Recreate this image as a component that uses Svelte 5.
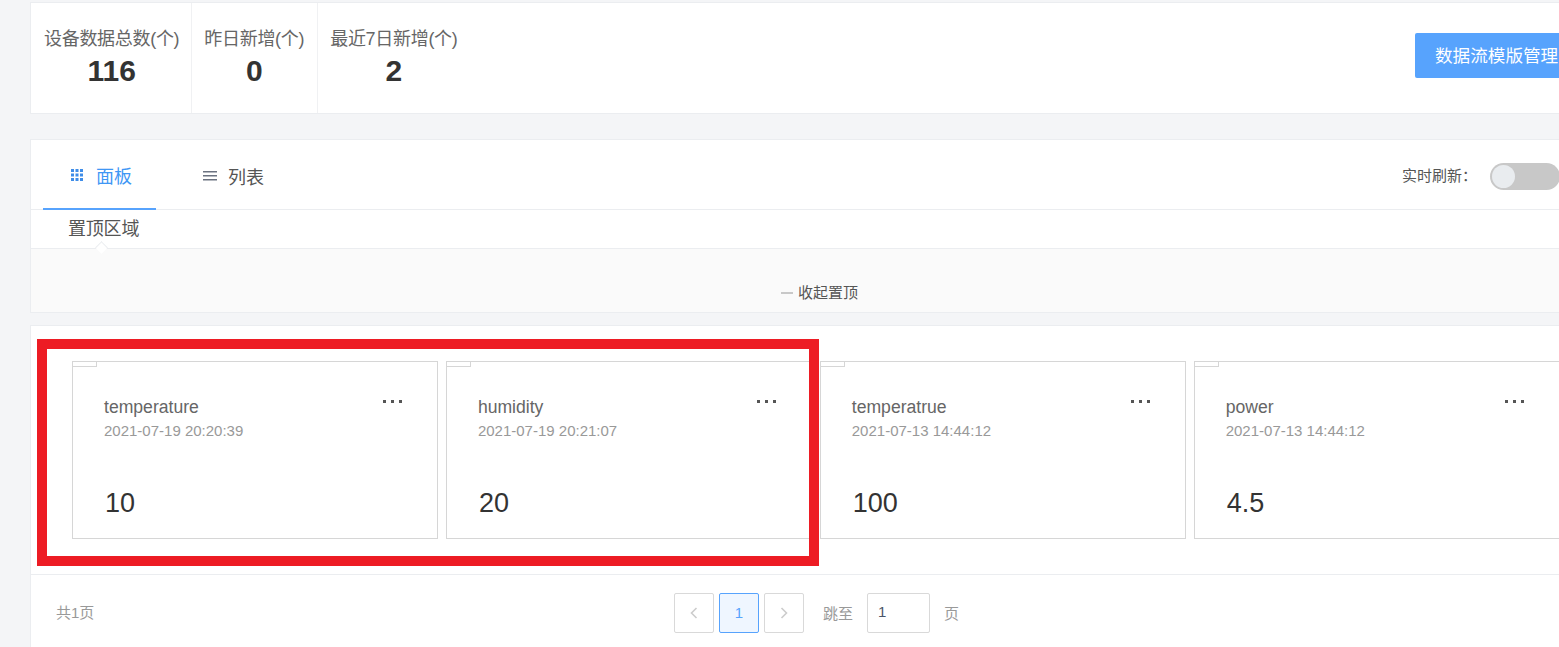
<script>
  const stats = [
    { label: '设备数据总数(个)', value: 116 },
    { label: '昨日新增(个)', value: 0 },
    { label: '最近7日新增(个)', value: 2 }
  ];

  const cards = [
    { name: 'temperature', time: '2021-07-19 20:20:39', value: '10' },
    { name: 'humidity', time: '2021-07-19 20:21:07', value: '20' },
    { name: 'temperatrue', time: '2021-07-13 14:44:12', value: '100' },
    { name: 'power', time: '2021-07-13 14:44:12', value: '4.5' }
  ];
</script>

<div class="page">
  <section class="panel summary">
    {#each stats as stat}
      <div class="stat">
        <div class="stat-label">{stat.label}</div>
        <div class="stat-value">{stat.value}</div>
      </div>
    {/each}
    <button class="primary">数据流模版管理</button>
  </section>

  <section class="panel top-area">
    <div class="tabs">
      <div class="tab active">
        <svg width="12" height="12" viewBox="0 0 12 12" fill="currentColor">
          <rect x="0" y="0" width="3" height="3" /><rect x="4.5" y="0" width="3" height="3" /><rect x="9" y="0" width="3" height="3" />
          <rect x="0" y="4.5" width="3" height="3" /><rect x="4.5" y="4.5" width="3" height="3" /><rect x="9" y="4.5" width="3" height="3" />
          <rect x="0" y="9" width="3" height="3" /><rect x="4.5" y="9" width="3" height="3" /><rect x="9" y="9" width="3" height="3" />
        </svg>
        <span>面板</span>
      </div>
      <div class="tab">
        <svg width="14" height="12" viewBox="0 0 14 12" fill="currentColor">
          <rect x="0" y="1" width="14" height="1.5" /><rect x="0" y="5" width="14" height="1.5" /><rect x="0" y="9" width="14" height="1.5" />
        </svg>
        <span>列表</span>
      </div>
      <div class="refresh">
        <span>实时刷新：</span>
        <div class="switch"><div class="knob"></div></div>
      </div>
    </div>
    <div class="pin-title">置顶区域</div>
    <div class="pin-body">
      <div class="caret"></div>
      <div class="collapse"><i></i>收起置顶</div>
    </div>
  </section>

  <section class="panel list">
    <div class="cards">
      {#each cards as card}
        <div class="card">
          <div class="corner"></div>
          <div class="more"><i></i><i></i><i></i></div>
          <div class="card-name">{card.name}</div>
          <div class="card-time">{card.time}</div>
          <div class="card-value">{card.value}</div>
        </div>
      {/each}
    </div>
    <div class="footer">
      <span class="total">共1页</span>
      <div class="pager">
        <div class="page-btn">
          <svg width="8" height="12" viewBox="0 0 8 12" fill="none" stroke="#ccc" stroke-width="1.6"><path d="M6.5 1 1.5 6l5 5" /></svg>
        </div>
        <div class="page-btn current">1</div>
        <div class="page-btn">
          <svg width="8" height="12" viewBox="0 0 8 12" fill="none" stroke="#ccc" stroke-width="1.6"><path d="M1.5 1l5 5-5 5" /></svg>
        </div>
        <span class="jump">跳至</span>
        <div class="page-input">1</div>
        <span class="unit">页</span>
      </div>
    </div>
  </section>

  <div class="highlight"></div>
</div>

<style>
  :global(body) {
    margin: 0;
    background: #f4f5f7;
  }

  .page {
    position: relative;
    width: 1559px;
    height: 647px;
    padding: 2px 0 0 30px;
    box-sizing: border-box;
    overflow: hidden;
    background: #f4f5f7;
    font-family: "Liberation Sans", "Noto Sans CJK SC", sans-serif;
    color: #666;
  }

  .panel {
    width: 1560px;
    box-sizing: border-box;
    background: #fff;
    border: 1px solid #ebedf0;
  }

  .summary {
    display: flex;
    height: 112px;
  }

  .stat {
    padding: 23px 12px 0 13px;
    border-right: 1px solid #f0f1f3;
    text-align: center;
    flex: none;
  }

  .stat + .stat {
    padding-left: 12px;
    padding-right: 13px;
  }

  .stat-label {
    font-size: 18px;
    line-height: 27px;
    letter-spacing: -0.3px;
    color: #666;
    white-space: nowrap;
  }

  .stat-value {
    font-size: 30px;
    line-height: 36px;
    font-weight: 700;
    color: #333;
  }

  .stat:nth-child(3) {
    border-right: 0;
  }

  .primary {
    margin: 30px 16px 0 auto;
    width: 158px;
    height: 45px;
    padding: 0 0 2px 20px;
    border: 0;
    border-radius: 2px 0 0 2px;
    background: #57a3fd;
    color: #fff;
    font: inherit;
    font-size: 17.6px;
    text-align: left;
    white-space: nowrap;
  }

  .top-area {
    margin-top: 25px;
    height: 174px;
  }

  .tabs {
    display: flex;
    align-items: center;
    height: 69px;
    padding-left: 12px;
    padding-right: 29px;
    border-bottom: 1px solid #ebedf0;
  }

  .tab {
    display: flex;
    align-items: center;
    justify-content: center;
    gap: 11px;
    box-sizing: border-box;
    width: 113px;
    height: 70px;
    padding: 2px 0 0 4px;
    margin-right: 16px;
    font-size: 18px;
    color: #555;
  }

  .tab svg {
    color: #6b7280;
  }

  .tab.active {
    gap: 13px;
    margin-right: 19px;
    margin-top: 1px;
    padding-top: 1px;
    color: #3f97f5;
    border-bottom: 2px solid #57a3fd;
  }

  .tab.active svg {
    color: #3f8de8;
  }

  .refresh {
    display: flex;
    align-items: center;
    gap: 13px;
    margin-left: auto;
    font-size: 15px;
    color: #555;
  }

  .switch {
    width: 70px;
    height: 27px;
    margin-top: 4px;
    border-radius: 14px;
    background: #c8c8c8;
    box-sizing: border-box;
    padding: 2px;
  }

  .knob {
    width: 23px;
    height: 23px;
    border-radius: 50%;
    background: #e9ecef;
  }

  .pin-title {
    height: 38px;
    padding-left: 37px;
    font-size: 18px;
    letter-spacing: -0.2px;
    line-height: 39px;
    color: #555;
  }

  .pin-body {
    position: relative;
    height: 64px;
    border-top: 1px solid #ebedf0;
    background: #fafafa;
    box-sizing: border-box;
    text-align: center;
  }

  .caret {
    position: absolute;
    left: 66px;
    top: -6px;
    width: 9px;
    height: 9px;
    box-sizing: border-box;
    background: #fff;
    border-top: 1px solid #ebedf0;
    border-left: 1px solid #ebedf0;
    transform: rotate(45deg);
  }

  .collapse {
    position: absolute;
    left: 750px;
    top: 34px;
    display: flex;
    align-items: center;
    font-size: 15px;
    line-height: 20px;
    color: #555;
    white-space: nowrap;
  }

  .collapse i {
    width: 12px;
    height: 2px;
    margin-right: 5px;
    background: #c8c8c8;
  }

  .list {
    margin-top: 12px;
    height: 341px;
  }

  .cards {
    display: flex;
    gap: 8px;
    height: 249px;
    box-sizing: border-box;
    padding: 35px 0 0 41px;
    border-bottom: 1px solid #ebedf0;
  }

  .card {
    position: relative;
    flex: none;
    width: 365.9px;
    height: 178px;
    box-sizing: border-box;
    padding: 34px 0 0 31px;
    border: 1px solid #d6d6d6;
  }

  .corner {
    position: absolute;
    left: 0;
    top: 0;
    width: 23px;
    height: 4px;
    border-right: 1px solid #d6d6d6;
    border-bottom: 1px solid #d6d6d6;
  }

  .more {
    position: absolute;
    right: 35px;
    top: 38px;
    display: flex;
    gap: 5px;
  }

  .more i {
    width: 3px;
    height: 3px;
    background: #555;
  }

  .card-name {
    font-size: 17.6px;
    line-height: 22px;
    color: #666;
  }

  .card-time {
    margin-top: 3px;
    font-size: 15px;
    line-height: 20px;
    color: #999;
  }

  .card-value {
    margin-top: 44px;
    padding-left: 1px;
    font-size: 27px;
    line-height: 36px;
    color: #333;
  }

  .footer {
    position: relative;
    display: flex;
    align-items: center;
    height: 76px;
    padding: 0 0 0 25px;
    font-size: 15px;
    color: #999;
  }

  .total {
    margin-bottom: 3px;
  }

  .pager {
    position: absolute;
    left: 643px;
    top: 18px;
    display: flex;
    align-items: center;
    gap: 5px;
  }

  .page-btn {
    display: flex;
    align-items: center;
    justify-content: center;
    box-sizing: border-box;
    width: 40px;
    height: 40px;
    border: 1px solid #d9d9d9;
    border-radius: 2px;
  }

  .page-btn.current {
    padding-bottom: 1px;
    border-color: #57a3fd;
    background: #eff6ff;
    color: #57a3fd;
  }

  .jump {
    margin-left: 14px;
    margin-bottom: 2px;
  }

  .page-input {
    box-sizing: border-box;
    width: 63px;
    height: 40px;
    margin-left: 9px;
    padding-left: 10px;
    border: 1px solid #d9d9d9;
    border-radius: 2px;
    line-height: 36px;
    color: #4a5568;
  }

  .unit {
    margin-left: 9px;
    margin-bottom: 2px;
  }

  /* annotation drawn on the screenshot */
  .highlight {
    position: absolute;
    left: 37px;
    top: 339px;
    width: 782px;
    height: 227px;
    box-sizing: border-box;
    border: 10px solid #ed1c24;
    pointer-events: none;
  }
</style>
